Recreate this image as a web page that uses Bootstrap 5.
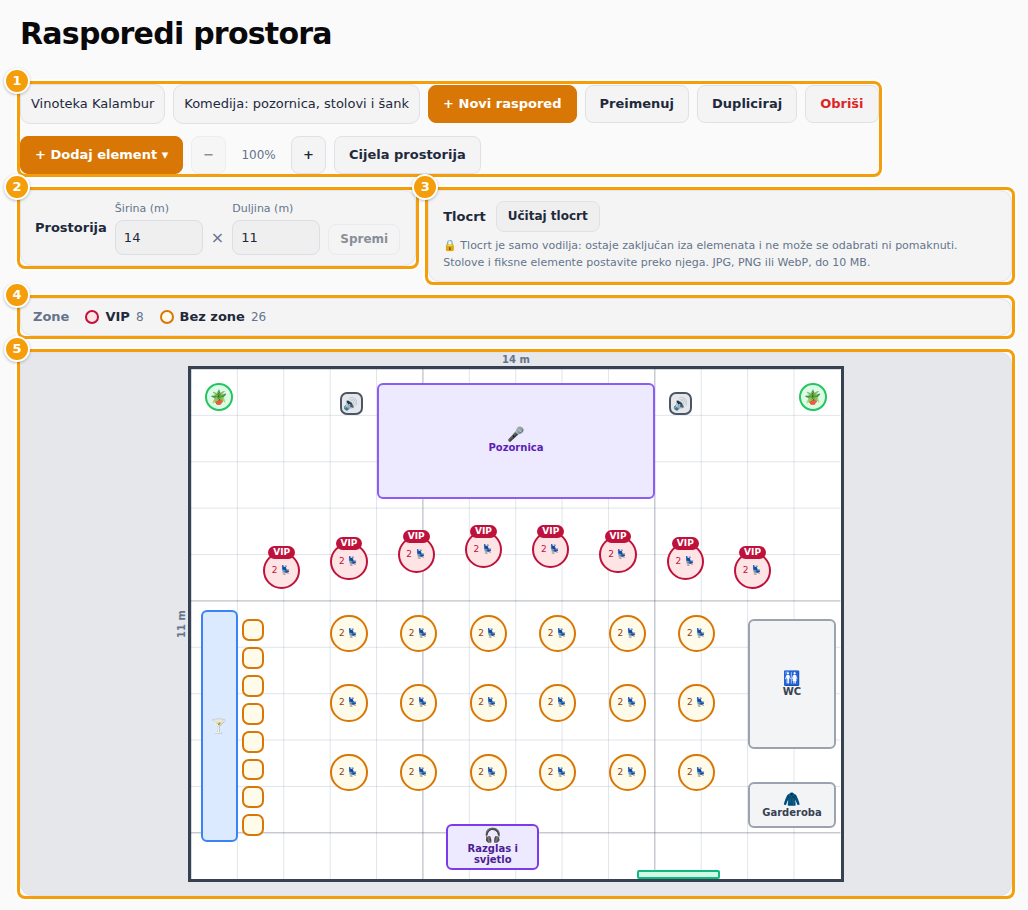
<!DOCTYPE html>
<html lang="hr">
<head>
<meta charset="utf-8">
<meta name="viewport" content="width=device-width, initial-scale=1">
<title>Rasporedi prostora</title>
<link href="https://cdn.jsdelivr.net/npm/bootstrap@5.3.0/dist/css/bootstrap.min.css" rel="stylesheet">
<style>
  body { background: #fafafa; color: #1e293b; font: 13px/20px "DejaVu Sans", "Noto Color Emoji", sans-serif; }
  main { padding: 12px 16px 14px 20px; }
  h1 { font-size: 30px; line-height: 44px; letter-spacing: -0.025em; color: #09090b; margin-bottom: 28px; }
  .muted { color: #64748b; }

  /* numbered highlight round each area */
  .tour { position: relative; border-radius: 5px; outline: 3px solid #f59e0b; box-shadow: 0 0 0 5px #fff; background: #fafafa; }
  .tour-no { position: absolute; z-index: 3; left: -16px; top: -16px; width: 26px; height: 26px; border: 2px solid #fff; border-radius: 50%; background: #f59e0b; color: #fff; font-weight: 700; line-height: 22px; text-align: center; box-shadow: 0 1px 3px rgba(0,0,0,.25); }
  .tool-rows { row-gap: 12px; }
  .panel-row { column-gap: 12px; }

  .btn { --bs-btn-font-size: 13px; --bs-btn-font-weight: 700; --bs-btn-line-height: 20px; --bs-btn-padding-x: 14px; --bs-btn-padding-y: 8px; --bs-btn-border-radius: 8px; --bs-btn-bg: #f4f4f5; --bs-btn-color: #1e293b; --bs-btn-border-color: #dfe1e7; --bs-btn-disabled-bg: #f4f4f5; --bs-btn-disabled-color: #1e293b; --bs-btn-disabled-border-color: #dfe1e7; --bs-btn-disabled-opacity: .5; white-space: nowrap; }
  .btn-tab { --bs-btn-font-weight: 400; --bs-btn-padding-x: 10px; --bs-btn-padding-y: 9px; --bs-btn-border-radius: 10px; }
  .btn-accent { --bs-btn-bg: #d97706; --bs-btn-color: #fff; --bs-btn-border-color: #d97706; --bs-btn-hover-bg: #b45309; --bs-btn-hover-color: #fff; }
  .btn-remove { --bs-btn-color: #dc2626; }
  .btn-step { --bs-btn-padding-x: 11px; }
  .btn-small { --bs-btn-font-size: 12px; --bs-btn-line-height: 17px; --bs-btn-padding-x: 11px; --bs-btn-padding-y: 6px; --bs-btn-bg: #efefef; }
  .zoom-level { width: 49px; font-size: 12px; text-align: center; }

  .panel { background: #f4f4f5; border: 1px solid #e4e4e7; border-radius: 12px; padding: 10px 14px; }
  .panel-slim { padding: 8px 12px; }
  .panel-size { padding-right: 15px; }
  .size-label { font-size: 11px; line-height: 16px; margin-bottom: 3px; display: block; }
  .size-input { width: 88px; height: 35px; font-size: 13px; line-height: 20px; padding: 6px 8px; border-radius: 8px; background: #efefef; border-color: #dcdee5; color: #1e293b; }
  .times { font-size: 16px; line-height: 35px; }
  .plan-head { column-gap: 10px; margin-bottom: 5px; }
  .hint { font-size: 11px; line-height: 17px; }
  .zone { display: flex; align-items: center; column-gap: 6px; }
  .zone-count { font-size: 12px; }
  .dot { width: 14px; height: 14px; border-radius: 50%; border: 2px solid; }

  .stage-area { background: #e5e7eb; border: 1px solid #e0e2e7; border-radius: 12px; padding-bottom: 13px; }
  .axis { font-size: 10px; line-height: 13px; font-weight: 700; }
  .axis-y { position: absolute; right: 100%; top: 50%; writing-mode: vertical-rl; transform: translateY(-50%) rotate(180deg); }
  .room-wrap { width: 66.2%; position: relative; }
  .room { position: relative; aspect-ratio: 14 / 11; box-sizing: content-box; border: 3px solid #374151; background: #fff; }
  .grid-lines { position: absolute; inset: 0; width: 100%; height: 100%; }
  .item { position: absolute; display: flex; flex-direction: column; align-items: center; justify-content: center; border: 2px solid; border-radius: 6px; font-size: 10px; line-height: 11px; font-weight: 700; text-align: center; }
  .item .emoji { font-size: 14px; line-height: 16px; font-weight: 400; }
  .item.labelled { padding-bottom: 2px; }
  .seat { border-radius: 50%; font-size: 9px; font-weight: 400; white-space: pre; }
  .stool { border-radius: 7px; }
  .zone-tag { position: absolute; top: -8px; padding: 0 5px; border-radius: 7px; background: #be123c; color: #fff; font-size: 9px; line-height: 13px; font-weight: 700; }
  .vip { background: #ffe4e6; border-color: #be123c; color: #be123c; }
  .plain { background: #fffbeb; border-color: #d97706; color: #92400e; }
  .k-stage { background: #ede9fe; border-color: #8b5cf6; color: #5b21b6; }
  .k-sound { background: #ede9fe; border-color: #7c3aed; color: #4c1d95; }
  .k-sound .emoji { line-height: 15px; }
  .k-plant { background: #dcfce7; border-color: #22c55e; border-radius: 50%; }
  .k-speaker { background: #e5e7eb; border-color: #4b5563; border-radius: 7px; }
  .k-speaker .emoji { font-size: 12px; }
  .k-bar { background: #dbeafe; border-color: #3b82f6; }
  .k-room { background: #f3f4f6; border-color: #9ca3af; color: #374151; }
  .k-door { background: #d1fae5; border-color: #10b981; border-radius: 2px; }
</style>
</head>
<body>
<main>
  <h1 class="fw-bold">Rasporedi prostora</h1>

  <section class="tour tool-rows d-inline-flex flex-column align-top">
    <span class="tour-no">1</span>
    <div class="d-flex flex-wrap gap-2 align-items-center">
      <button class="btn btn-tab" type="button">Vinoteka Kalambur</button>
      <button class="btn btn-tab" type="button">Komedija: pozornica, stolovi i šank</button>
      <button class="btn btn-accent" type="button">+ Novi raspored</button>
      <button class="btn" type="button">Preimenuj</button>
      <button class="btn" type="button">Dupliciraj</button>
      <button class="btn btn-remove" type="button">Obriši</button>
    </div>
    <div class="d-flex flex-wrap gap-2 align-items-center">
      <button class="btn btn-accent" type="button">+ Dodaj element ▾</button>
      <button class="btn btn-step" type="button" disabled>−</button>
      <span class="zoom-level muted">100%</span>
      <button class="btn btn-step" type="button">+</button>
      <button class="btn" type="button">Cijela prostorija</button>
    </div>
  </section>

  <div class="panel-row d-flex align-items-start mt-3">
    <section class="tour flex-shrink-0">
      <span class="tour-no">2</span>
      <form class="panel panel-size d-flex align-items-center gap-2">
        <strong>Prostorija</strong>
        <div class="d-flex align-items-end gap-2">
          <div><label class="size-label muted" for="w">Širina (m)</label><input class="form-control size-input" id="w" value="14"></div>
          <span class="times muted">×</span>
          <div><label class="size-label muted" for="l">Duljina (m)</label><input class="form-control size-input" id="l" value="11"></div>
          <button class="btn btn-small" type="button" disabled>Spremi</button>
        </div>
      </form>
    </section>
    <section class="tour flex-grow-1">
      <span class="tour-no">3</span>
      <div class="panel">
        <div class="plan-head d-flex align-items-center">
          <strong>Tlocrt</strong>
          <button class="btn btn-small" type="button">Učitaj tlocrt</button>
        </div>
        <p class="hint muted mb-0">🔒 Tlocrt je samo vodilja: ostaje zaključan iza elemenata i ne može se odabrati ni pomaknuti.<br>Stolove i fiksne elemente postavite preko njega. JPG, PNG ili WebP, do 10 MB.</p>
      </div>
    </section>
  </div>

  <section class="tour mt-3">
    <span class="tour-no">4</span>
    <div class="panel panel-slim d-flex align-items-center gap-3">
      <strong class="muted">Zone</strong>
      <span class="zone"><i class="dot vip"></i><strong>VIP</strong><span class="zone-count muted">8</span></span>
      <span class="zone"><i class="dot plain"></i><strong>Bez zone</strong><span class="zone-count muted">26</span></span>
    </div>
  </section>

  <section class="tour mt-3">
    <span class="tour-no">5</span>
    <div class="stage-area">
      <div class="axis muted text-center">14 m</div>
      <div class="room-wrap mx-auto">
        <span class="axis axis-y muted">11 m</span>
        <div class="room" id="room">
          <svg class="grid-lines" id="grid" aria-hidden="true"></svg>
        </div>
      </div>
    </div>
  </section>
</main>
<script src="https://cdn.jsdelivr.net/npm/bootstrap@5.3.0/dist/js/bootstrap.bundle.min.js"></script>
<script>
  // All positions and sizes are in metres; the room is 14 x 11 m.
  const W = 14, H = 11, room = document.getElementById('room');

  let lines = '';
  for (const major of [false, true]) {
    for (let i = 0; i < W; i++) if ((i % 5 === 0) === major)
      lines += `<line x1="${i / W * 100}%" x2="${i / W * 100}%" y1="0" y2="100%" stroke="${major ? '#475569' : '#94a3b8'}" stroke-opacity="${major ? .45 : .28}"/>`;
    for (let i = 0; i < H; i++) if ((i % 5 === 0) === major)
      lines += `<line y1="${i / H * 100}%" y2="${i / H * 100}%" x1="0" x2="100%" stroke="${major ? '#475569' : '#94a3b8'}" stroke-opacity="${major ? .45 : .28}"/>`;
  }
  document.getElementById('grid').innerHTML = lines;

  function add(cls, x, y, w, h, html = '') {
    room.insertAdjacentHTML('beforeend',
      `<div class="item ${cls}" style="left:${x / W * 100}%;top:${y / H * 100}%;width:${w / W * 100}%;height:${h / H * 100}%">${html}</div>`);
  }
  const emoji = e => `<span class="emoji">${e}</span>`;

  add('k-stage labelled', 4, .3, 6, 2.5, emoji('🎤') + 'Pozornica');
  add('k-plant', .3, .3, .6, .6, emoji('🪴'));
  add('k-plant', 13.1, .3, .6, .6, emoji('🪴'));
  add('k-speaker', 3.2, .5, .5, .5, emoji('🔊'));
  add('k-speaker', 10.3, .5, .5, .5, emoji('🔊'));
  add('k-bar', .2, 5.2, .8, 5, emoji('🍸'));
  add('k-room labelled', 12, 5.4, 1.9, 2.8, emoji('🚻') + 'WC');
  add('k-room labelled', 12, 8.9, 1.9, 1, emoji('🧥') + 'Garderoba');
  add('k-sound', 5.5, 9.8, 2, 1, emoji('🎧') + 'Razglas i<br>svjetlo');
  add('k-door', 9.6, 10.8, 1.8, .2);

  [[1.95, 4.35], [3.4, 4.15], [4.85, 4], [6.3, 3.9], [7.75, 3.9], [9.2, 4], [10.65, 4.15], [12.1, 4.35]]
    .forEach(([x, y]) => add('seat vip', x - .4, y - .4, .8, .8, '<span class="zone-tag">VIP</span><span>2 💺</span>'));
  for (const y of [5.7, 7.2, 8.7])
    for (const x of [3.4, 4.9, 6.4, 7.9, 9.4, 10.9])
      add('seat plain', x - .4, y - .4, .8, .8, '<span>2 💺</span>');
  for (let i = 0; i < 8; i++) add('stool plain', 1.1, 5.4 + i * .6, .47, .47);
</script>
</body>
</html>
